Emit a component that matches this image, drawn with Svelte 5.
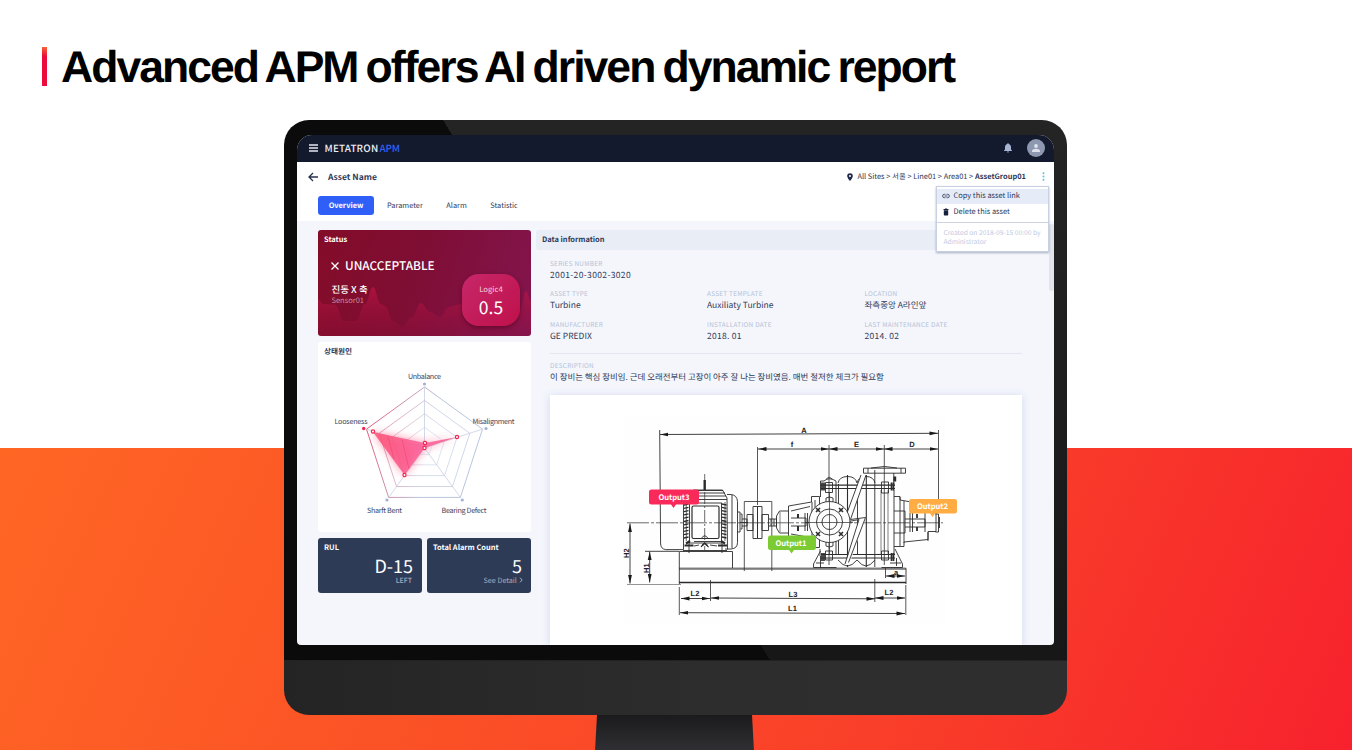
<script>
  const tabs = ['Overview', 'Parameter', 'Alarm', 'Statistic'];
  const fields = [
    ['SERIES NUMBER', '2001-20-3002-3020', 'wide'],
    ['ASSET TYPE', 'Turbine'],
    ['ASSET TEMPLATE', 'Auxiliaty Turbine'],
    ['LOCATION', '좌측중앙 A라인앞'],
    ['MANUFACTURER', 'GE PREDIX'],
    ['INSTALLATION DATE', '2018. 01', 'date'],
    ['LAST MAINTENANCE DATE', '2014. 02', 'date']
  ];

  const ring = (s) =>
    [0, 1, 2, 3, 4]
      .map((i) => {
        const a = (i * 72 - 90) * Math.PI / 180;
        return `${(106.5 + 61 * s * Math.cos(a)).toFixed(1)},${(106 + 61 * s * Math.sin(a)).toFixed(1)}`;
      })
      .join(' ');
  const rings = [1, 0.78, 0.56, 0.34, 0.13];
  const axes = ring(1).split(' ').map((p) => p.split(','));
  const radarLabels = [
    ['Unbalance', 106.5, 37, 33],
    ['Misalignment', 175.5, 82, 42],
    ['Bearing Defect', 146, 170.5, 45],
    ['Sharft Bent', 66.5, 170.5, 35],
    ['Looseness', 33, 82, 33]
  ];
  const endDots = [[106.5, 42], [168, 86.5], [144.3, 158], [69, 158]];
  const samples = [[55, 89.5], [107, 101], [139, 95], [106.5, 106], [86.5, 133]];

  const wavePts = [[0, 69], [5, 74], [17, 74.5], [26, 91], [38, 91], [47, 74], [55, 57], [63, 74], [67, 76], [75, 91], [84, 97], [94, 87], [103, 73], [112, 82], [122, 87], [131, 77], [144, 74], [152, 72], [161, 61], [167, 76], [176, 91], [192, 94], [202, 81], [208, 61], [213, 71]];
  const wave =
    wavePts
      .map(([x, y], i) => {
        if (!i) return `M${x} ${y}`;
        const [px, py] = wavePts[i - 1];
        const k = (x - px) * 0.42;
        return `C${px + k} ${py} ${x - k} ${y} ${x} ${y}`;
      })
      .join('') + 'V106H0z';

  /* horizontal dimension lines: x1, x2, y, label, label x, label y, rise */
  const dims = [
    [660, 938, 434.5, 'A', 804, 432.5, 1.2],
    [758, 829, 449, 'f', 792, 447, 0],
    [829, 884, 449, 'E', 856.5, 447, 0],
    [884, 938, 449, 'D', 912, 446.5, 0],
    [681, 710, 598.5, 'L2', 695, 595.5, 0],
    [711, 875, 598, 'L3', 793, 596.5, -0.8],
    [875, 905, 598, 'L2', 889, 594.5, 0],
    [680, 905, 612.7, 'L1', 792.5, 610.5, -0.8],
    [886, 905, 576, 'a', 896, 574.5, 0]
  ];
  const ribs = Array.from({ length: 11 }, (_, i) => 505 + i * 3.3);
</script>

<div class="page">
  <h1><span class="mark"></span>Advanced APM offers AI driven dynamic report</h1>

  <div class="monitor">
    <div class="bezel">
      <div class="screen">
        <header class="topbar">
          <svg class="burger" width="9" height="8" viewBox="0 0 9 8"><path d="M0 1h9M0 4h9M0 7h9" stroke="#e4e7f0" stroke-width="1.3" /></svg>
          <span class="brand">METATRON <b>APM</b></span>
          <svg class="bell" width="8" height="10" viewBox="0 0 8 10"><path d="M4 .3c.5 0 .8.3.8.8C6.200 1.500 7 2.700 7 4.200v2.300l1 1.100v.5H0v-.5l1-1.100V4.200C1 2.700 1.800 1.500 3.200 1.100c0-.5.3-.8.8-.8zM3 8.600h2c0 .6-.4 1-1 1s-1-.4-1-1z" fill="#a9b4d3" /></svg>
          <span class="avatar"><svg width="8" height="8" viewBox="0 0 8 8"><circle cx="4" cy="2" r="1.900" fill="#dde2ec" /><path d="M0 8V7c0-1.500 2.500-2.300 4-2.300S8 5.500 8 7v1z" fill="#dde2ec" /></svg></span>
        </header>

        <div class="head">
          <div class="crumbs">
            <svg class="back" width="10" height="10" viewBox="0 0 10 10"><path d="M10 5H1M5 1L1 5l4 4" fill="none" stroke="#28324f" stroke-width="1.300" /></svg>
            <strong class="asset">Asset Name</strong>
            <svg class="pin" width="6" height="8" viewBox="0 0 6 8"><path d="M3 .2a2.800 2.800 0 0 0-2.800 2.800C.2 5 3 7.900 3 7.900S5.800 5 5.800 3A2.800 2.800 0 0 0 3 .2zm0 1.800a1 1 0 1 1 0 2 1 1 0 0 1 0-2z" fill="#1f2a4a" fill-rule="evenodd" /></svg>
            <span class="trail">All Sites &gt; 서울 &gt; Line01 &gt; Area01 &gt; <b>AssetGroup01</b></span>
            <svg class="dots" width="3" height="9" viewBox="0 0 3 9"><g fill="#43c5ea"><circle cx="1.500" cy="1.200" r=".95" /><circle cx="1.500" cy="4.500" r=".95" /><circle cx="1.500" cy="7.800" r=".95" /></g></svg>
          </div>
          <nav>
            {#each tabs as t, i}
              <span class="tab" class:active={i === 0}>{t}</span>
            {/each}
          </nav>
        </div>

        <main>
          <section class="left">
            <div class="card status">
              <svg class="wave" viewBox="0 0 213 106" width="213" height="106">
                <defs><linearGradient id="wv" gradientUnits="userSpaceOnUse" x1="0" y1="57" x2="0" y2="106"><stop offset="0" stop-color="#c81644" stop-opacity=".6" /><stop offset="1" stop-color="#a01040" stop-opacity=".1" /></linearGradient></defs>
                <path d={wave} fill="url(#wv)" />
              </svg>
              <h3>Status</h3>
              <div class="verdict"><svg width="8" height="8" viewBox="0 0 8 8"><path d="M.5.5l7 7M7.500.5l-7 7" stroke="#fff" stroke-width="1.300" /></svg>UNACCEPTABLE</div>
              <div class="axis">진동 X 축</div>
              <div class="sensor">Sensor01</div>
              <div class="logic"><span>Logic4</span><em>0.5</em></div>
            </div>

            <div class="card cause">
              <h3>상태원인</h3>
              <svg class="radar" viewBox="0 0 213 190" width="213" height="190">
                <defs>
                  <linearGradient id="rg" gradientUnits="userSpaceOnUse" x1="48" y1="100" x2="112" y2="112"><stop offset="0" stop-color="#e0607f" /><stop offset="1" stop-color="#b9c5de" /></linearGradient>
                  <linearGradient id="fillg" x1="0" y1="0" x2="1" y2="0"><stop offset="0" stop-color="#fb4f72" /><stop offset=".6" stop-color="#fb5f9b" /><stop offset="1" stop-color="#fb4f80" /></linearGradient>
                  <filter id="glow" x="-30%" y="-30%" width="160%" height="160%"><feGaussianBlur stdDeviation="4.5" /></filter>
                </defs>
                {#each rings as r, i}
                  <polygon points={ring(r)} fill="none" stroke="url(#rg)" stroke-width={i ? 0.8 : 1} opacity={1 - i * 0.14} />
                {/each}
                {#each axes as a}
                  <line x1="106.500" y1="106" x2={a[0]} y2={a[1]} stroke="#bec8df" stroke-width=".7" />
                {/each}
                <polygon points="55,90 107,101 139,95 106.500,106 86.500,133" fill="#ff3d6e" opacity=".55" filter="url(#glow)" />
                <polygon points="55,90 107,101 139,95 106.500,106 86.500,133" fill="url(#fillg)" opacity=".85" />
                <path d="M70 94.500L76 117M84 97.500L91 127" stroke="#e54270" stroke-width=".5" />
                {#each samples as s}
                  <circle cx={s[0]} cy={s[1]} r="1.600" fill="#fff" stroke="#f0264f" stroke-width="1.2" />
                {/each}
                {#each endDots as d}
                  <circle cx={d[0]} cy={d[1]} r="1.600" fill="#a4b2d2" />
                {/each}
                <circle cx="45.700" cy="86.500" r="1.700" fill="#f0264f" />
                {#each radarLabels as l}
                  <text x={l[1]} y={l[2]} textLength={l[3]} text-anchor="middle">{l[0]}</text>
                {/each}
              </svg>
            </div>

            <div class="pair">
              <div class="card stat"><h3>RUL</h3><em>D-15</em><span class="left-tag">LEFT</span></div>
              <div class="card stat"><h3>Total Alarm Count</h3><em>5</em><span>See Detail <svg width="4" height="6" viewBox="0 0 4 6"><path d="M1 .7L3.200 3 1 5.300" fill="none" stroke="#b4bccb" stroke-width=".9" /></svg></span></div>
            </div>
          </section>

          <section class="right">
            <h3 class="bar">Data information</h3>
            <div class="info">
              <dl>
                {#each fields as f}
                  <div class={f[2]}><dt>{f[0]}</dt><dd>{f[1]}</dd></div>
                {/each}
              </dl>
              <div class="desc"><dt>DESCRIPTION</dt><dd>이 장비는 핵심 장비임. 근데 오래전부터 고장이 아주 잘 나는 장비였음. 매번 철저한 체크가 필요함</dd></div>
              <div class="figure">
                <svg viewBox="550 395 472 250" width="472" height="250">
                  <defs>
                    <marker id="ar" viewBox="0 0 8 4" refX="8" refY="2" markerWidth="8.500" markerHeight="4.500" markerUnits="userSpaceOnUse" orient="auto-start-reverse"><path d="M0 .2L8 2 0 3.800z" fill="#191919" /></marker>
                  </defs>
                  <rect x="624" y="415" width="321" height="210" fill="#fefefe" />
                  <g fill="none" stroke="#2c2c2c" stroke-width=".9">
                    {#each dims as d}
                      <line x1={d[0]} y1={d[2]} x2={d[1]} y2={d[2] - d[6]} marker-start="url(#ar)" marker-end="url(#ar)" />
                    {/each}
                    <line x1="630" y1="523.500" x2="630" y2="583.500" marker-start="url(#ar)" marker-end="url(#ar)" />
                    <line x1="649.700" y1="551.500" x2="649.700" y2="582.500" marker-start="url(#ar)" marker-end="url(#ar)" />
                    <path d="M757.500 447v58M829 445v120M884.300 445v120M938.500 430v81" stroke-width=".8" />
                    <path d="M627 522.800h316" stroke-width=".7" stroke-dasharray="22 2 3 2" />
                    <path d="M704.700 474v76" stroke-width=".7" stroke-dasharray="12 2 2 2" />
                    <!-- guard and motor -->
                    <path d="M659.700 430l.9 114q.4 5 5 5.600h18M645 551.300h34" />
                    <path d="M683.500 549.500V501l4-3 6-8h29l4.500 8 .5 51.500M690 493h35M688 496h38M685 499.500h42M692 490.500h31" />
                    <path d="M727 494.500h4q6 .5 6.500 7v41q0 6-6.500 6.500h-6M732 495v53M737.500 512h2.500v20h-2.500M740.500 514h1.500v15h-1.500" />
                    <rect x="689.500" y="503" width="32" height="40" />
                    <rect x="692" y="506" width="27" height="32.500" rx="1.500" stroke-width="1.200" />
                    <path d="M686.300 502v39M725 502v39" stroke-width=".7" />
                    <g stroke-width="1.300">
                      {#each ribs as y}<path d={`M684 ${y}l4.500-1M722 ${y - 1}l4.500 1`} />{/each}
                    </g>
                    <path d="M704.700 480v10" stroke-width="2.400" />
                    <path d="M684.500 545.500h9M718 545.500h9M690 541l-4 2.500M721 541l4 2.500" stroke-width="2.200" />
                    <path d="M701 539q3.700-6.500 7.400 0M694 541.500h27M689 541v12M722 541v12M694 546l5-1M710 545l7 1M683 550.500h44" />
                    <path d="M701 547q3.700-8 7.400 0l-3.700-3z" fill="#2c2c2c" />
                    <!-- coupling -->
                    <path d="M744.300 571v-69.500h27.500V571" stroke-width=".8" />
                    <path d="M742 519h5v7h-5M740 522.500h8M747 514.500h6v16h-6zM753 506.500h4.500v32H753zM757.500 506.500h4.500v32h-4.500zM762 514.500h6.500v16H762zM768.500 519h8v7h-8M771 519v7M774 519v7M776.500 516l3-5h9v22h-9l-3-5z" />
                    <path d="M780 512v20" stroke-width=".6" />
                    <!-- pump left bearing -->
                    <path d="M788.500 511v-5l23-4v-5.500h8v51h-8V542l-23-4v-5M791 511l19-4.500M791 534l19 3.500M791 518h15v8h-15M805 513v18M807.500 513v18M812 502v40M815 500v45" />
                    <path d="M798 514v4M798 526v5" stroke-width="2" />
                    <!-- stages -->
                    <path d="M820.500 497v-16h3.500q5-4.500 12 0v74M838.500 484v71M857.500 484v70M874.800 470v97M894 490v64M838 483q1.500-6.500 9.500-6.500t9.500 6.500M857 483q1.500-6.500 9-6.500t9 6.500M820 549v7M838 560q5 6 9.500 6t9.500-6M857 560q5 6 9 6t9-6" />
                    <path d="M847.500 475v92M866.300 475v92" stroke-width="1.100" />
                    <path d="M881 490v64M888 490v64" stroke-width=".6" />
                    <path d="M821 485.200h74M821 488.500h74M821 554.500h74M821 558h74" stroke-width="1.200" />
                    <path d="M822 482.500v8M824 482.500v8M891.500 482.500v8M893.500 482.500v8M822 553v8M824 553v8M891.500 553v8M893.500 553v8" stroke-width="1.700" />
                    <path d="M825.500 482.500h7v10h-7zM881.500 482h7v11h-7zM825.500 551h7v9h-7zM881.500 551h7v9h-7zM826 479.500q3-4 6.500 0" />
                    <path d="M863.500 468.200h42v5h-42zM868 468v5M901 468v5M871 468q14-3 26 0M893.800 473v12" />
                    <path d="M894.800 476.500v5" stroke-width="2.800" />
                    <!-- break line -->
                    <path d="M861 475l-17.500 47.500 15.500-3-14 45.500 4 0 16.500-47-15 2 15.500-45z" fill="#fefefe" stroke="none" />
                    <path d="M861 475l-17.500 47.500 15.500-3-14 44.500M866 475l-15.500 44.500 15-2-17 45" />
                    <!-- right bearing -->
                    <path d="M894 496.500h6v3.500l28 5v8M894 546.500h10v-4.500l24-2.500v-8h8V513M900 497v49M904 501v42M894 511h11v22h-11M910 513v19M912.500 513v19M905 519h20v8h-20M925 512v20M935.500 514h3v18h-3M939.500 517v11M928 541v-9" />
                    <path d="M917 514v4M917 527v4" stroke-width="1.800" />
                    <!-- inlet flange -->
                    <circle cx="829.500" cy="522" r="20.500" fill="#fefefe" />
                    <circle cx="829.500" cy="522" r="13" />
                    <circle cx="829.500" cy="522" r="7.500" />
                    <path d="M826 502v-4q3.500-2 7 0v4M826 542v4q3.500 2 7 0v-4" />
                    <path d="M829.500 492v63M805 522.500h48" stroke-width=".7" />
                    <path d="M816 508l4 4m0-4l-4 4M839 508l4 4m0-4l-4 4M816 532l4 4m0-4l-4 4M839 532l4 4m0-4l-4 4" stroke-width="1.600" />
                    <!-- feet and base -->
                    <path d="M820.500 551l-7 13v3.500h23M895 549l7.500 15v3.500h-21M816 563h8M890 563h11M820.500 556v12M896.500 558v8" />
                    <path d="M679.300 584v-32.500h53.200V568M679 568.200h227V584" />
                    <path d="M679 569.500h227M627 584.500h54" stroke-width=".5" />
                    <path d="M679 582.500h227" stroke-width="1.700" />
                    <path d="M679.300 587v28M710.500 580v21M874.800 579v23M905.800 585v30M885.500 568v10" stroke-width=".8" />
                  </g>
                  <g class="dimtext">
                    {#each dims as d}<text x={d[4]} y={d[5]} text-anchor="middle">{d[3]}</text>{/each}
                    <text transform="translate(629 558) rotate(-90)">H2</text>
                    <text transform="translate(649 573) rotate(-90)">H1</text>
                  </g>
                  <g class="tag">
                    <path d="M651.500 489.500h45q2.500 0 2.500 2.500v10q0 2.500-2.500 2.500H676l-2.500 3.500-2.500-3.500h-19.500q-2.500 0-2.500-2.500v-10q0-2.500 2.500-2.500z" fill="#f92a59" />
                    <text x="674" y="499.700" textLength="31" text-anchor="middle">Output3</text>
                    <path d="M770.500 535.500h43q2.500 0 2.500 2.500v9.500q0 2.500-2.500 2.500H794l-2.500 3.500-2.500-3.500h-18.500q-2.500 0-2.500-2.500V538q0-2.500 2.500-2.500z" fill="#7ccb32" />
                    <text x="791" y="545.700" textLength="31" text-anchor="middle">Output1</text>
                    <path d="M911.500 499h43q2.500 0 2.500 2.500v9.500q0 2.500-2.500 2.500H935l-2.500 3.500-2.500-3.500h-18.500q-2.500 0-2.500-2.500v-9.500q0-2.500 2.500-2.500z" fill="#ffad42" />
                    <text x="932.500" y="509.200" textLength="31" text-anchor="middle">Output2</text>
                  </g>
                </svg>
              </div>
            </div>
          </section>
          <div class="scroll"></div>
        </main>

        <div class="menu">
          <div class="item on"><svg width="8" height="8" viewBox="0 0 8 8"><path d="M3.500 2.300H2.300a1.700 1.700 0 0 0 0 3.400h1.200M4.500 2.300h1.200a1.700 1.700 0 0 1 0 3.400H4.500M2.500 4h3" fill="none" stroke="#2d3855" stroke-width=".8" /></svg>Copy this asset link</div>
          <div class="item"><svg width="8" height="8" viewBox="0 0 8 8"><path d="M1.500 1h1.300l.4-.5h1.600l.4.500h1.300v.9h-5zM1.800 2.300h4.400v4.500q0 .7-.7.7h-3q-.7 0-.7-.7z" fill="#17203d" /></svg>Delete this asset</div>
          <p>Created on 2018-09-15 00:00 by<br />Administrator</p>
        </div>
      </div>
    </div>
    <div class="chin"></div>
  </div>
  <div class="stand"></div>
</div>

<style>
  :global(body) { margin: 0; overflow: hidden; }
  .page {
    width: 1352px; height: 750px; overflow: hidden;
    display: flex; flex-direction: column; align-items: center;
    text-rendering: geometricPrecision;
    font-family: "Noto Sans CJK KR", "Noto Sans", sans-serif; color: #303a58;
    background:
      linear-gradient(#fff, #fff) 0 0 / 100% 448px no-repeat,
      linear-gradient(114deg, #ff6624 0%, #fb5026 38%, #f93e29 68%, #f7212d 100%) 0 448px / 100% 302px no-repeat;
  }
  .page * { box-sizing: border-box; }
  h1, h3, p, dl, dd { margin: 0; }
  em { font-style: normal; }
  h1 {
    align-self: stretch; flex: none; height: 120px; padding: 47px 0 0 42px;
    display: flex; gap: 14px; white-space: nowrap; color: #000;
    font: bold 44.500px/42px "Liberation Sans", Arial, sans-serif; letter-spacing: -1.960px; word-spacing: -2.300px;
  }
  .mark { width: 5px; height: 39px; background: linear-gradient(15deg, #ec0b3a 75%, #f86a35 100%); }
  .monitor { width: 783px; flex: none; margin-right: 1px; }
  .bezel {
    height: 540px; padding: 15px 13px; border-radius: 25px 25px 0 0;
    background: linear-gradient(to top right, #0b0b0b 0 50%, transparent 50%) 159px 0 / 327px 540px no-repeat,
      linear-gradient(#0b0b0b, #0b0b0b) 0 0 / 159px 100% no-repeat,
      linear-gradient(#242424, #171717);
  }
  .screen { position: relative; width: 757px; height: 510px; border-radius: 15px 15px 4px 4px; overflow: hidden; background: #f4f6fc; display: flex; flex-direction: column; }
  .chin { height: 55px; border-radius: 0 0 25px 25px; background: linear-gradient(90deg, #242424, #2d2d2d 55%, #2e2e2e); border-top: 1px solid #242120; }
  .stand { width: 160px; height: 36px; margin-right: 2px; flex: none; background: linear-gradient(#1b1b1d, #302f33); clip-path: polygon(2px 0, 157px 0, 159px 100%, 0 100%); }

  .topbar { height: 27px; flex: none; background: #141a2e; display: flex; align-items: center; padding: 0 9px 2px 11.500px; }
  .brand { margin-left: 7px; font-size: 9.900px; line-height: 12px; font-weight: 500; letter-spacing: .18px; color: #eceef4; }
  .brand b { font-weight: 500; color: #2f62f5; margin-left: -1.200px; letter-spacing: -.2px; }
  .bell { margin-left: auto; }
  .avatar { margin-left: 15.500px; width: 18px; height: 18px; border-radius: 50%; background: #8d97af; display: grid; place-items: center; }

  .head { height: 59px; flex: none; background: #fff; }
  .crumbs { height: 29px; display: flex; align-items: center; padding: 0 9px 0 11px; line-height: 12px; }
  .asset { margin-left: 10px; font-size: 8.500px; font-weight: 700; }
  .pin { margin-left: auto; }
  .trail { margin: 0 16px 0 4px; font-size: 7.450px; white-space: nowrap; }
  .dots { margin-right: 0; }
  nav { display: flex; padding: 5px 0 0 21px; font-size: 7.400px; line-height: 19px; }
  .tab { margin-right: 23.500px; }
  .tab.active { width: 56px; margin-right: 13px; border-radius: 3px; background: #305ff8; color: #fff; text-align: center; font-weight: 700; }

  main { flex: 1; min-height: 0; display: flex; padding: 9px 0 0 21px; gap: 5px; }
  .left { width: 213px; flex: none; display: flex; flex-direction: column; gap: 6px; }
  .card { border-radius: 3px; padding: 4px 6px; position: relative; }
  h3 { font-size: 7.450px; line-height: 12px; font-weight: 700; }
  .status { height: 106px; color: #fff; background: linear-gradient(108deg, #830c28, #7f0e34 45%, #82154f); overflow: hidden; }
  .wave { position: absolute; left: 0; top: 0; }
  .status h3 { position: relative; }
  .verdict { position: relative; margin: 11.500px 0 0 7px; display: flex; align-items: center; gap: 6px; font-size: 11.850px; line-height: 16px; font-weight: 500; }
  .axis { position: relative; margin: 9px 0 0 7.500px; font-size: 9.500px; line-height: 12px; font-weight: 500; }
  .sensor { position: relative; margin-left: 7.500px; font-size: 7.500px; line-height: 12px; color: #ca8b9f; }
  .logic { position: absolute; left: 144px; top: 44px; width: 58px; height: 52px; border-radius: 17px; background: linear-gradient(135deg, #c7276a, #bf114a); box-shadow: 0 2px 4px rgba(70, 0, 25, .5); display: flex; flex-direction: column; align-items: center; padding-top: 9.500px; }
  .logic span { font-size: 7.600px; line-height: 12px; color: #f0bacd; font-weight: 500; }
  .logic em { font-size: 17.500px; line-height: 24px; }
  .cause { height: 190px; background: #fff; }
  .cause h3 { font-size: 7.600px; font-weight: 700; }
  .radar { position: absolute; left: 0; top: 0; }
  .radar text { font-size: 7.200px; fill: #3c4560; }
  .pair { display: grid; grid-template-columns: 104px 104px; gap: 5px; }
  .stat { height: 55px; background: #2e3b57; color: #fff; display: flex; flex-direction: column; }
  .stat em { font-size: 18px; line-height: 22px; margin-top: 1px; text-align: right; padding-right: 3px; }
  .stat span { font-size: 7.200px; line-height: 9px; text-align: right; color: #a5aec0; padding-right: 2.500px; margin-top: -.5px; }
  .stat .left-tag { font-size: 7px; font-weight: 500; padding-right: 4px; }

  .right { width: 508px; flex: none; }
  .bar { height: 20px; line-height: 20px; padding-left: 6px; background: #e9edf6; border-radius: 3px; }
  .info { padding-left: 14px; width: 486px; }
  dl { display: grid; grid-template-columns: 157px 157.500px 157.500px; grid-auto-rows: 30.800px; padding-top: 7.500px; height: 103.500px; border-bottom: 1px solid #e2e6f0; }
  .wide { grid-column: 1 / -1; }
  dt { font-size: 6.400px; line-height: 11px; color: #b4c1d5; letter-spacing: .28px; white-space: nowrap; }
  dd { font-size: 8.500px; line-height: 13px; white-space: nowrap; }
  .wide dd { letter-spacing: .36px; }
  .date dd { letter-spacing: .28px; }
  .desc { padding-top: 6px; height: 41.500px; }
  .desc dd { font-size: 8.450px; }
  .figure { width: 472px; height: 250px; background: #fff; box-shadow: 0 1px 8px rgba(85, 105, 180, .2); }
  .figure svg { display: block; }
  .dimtext { font: bold 7.500px "Liberation Sans", Arial, sans-serif; fill: #222; }
  .tag text { font-size: 7.600px; font-weight: 700; fill: #fff; }
  .scroll { position: absolute; right: 0; top: 89px; width: 5px; height: 67px; border-radius: 2px; background: #e1e4eb; }

  .menu { position: absolute; left: 639px; top: 51px; width: 113px; height: 66px; padding-top: 1.500px; background: #fff; border: 1px solid #c8d1e4; box-shadow: 0 1px 2px rgba(50, 65, 100, .4); }
  .item { height: 16px; display: flex; align-items: center; gap: 3.500px; padding: 0 0 0 5px; font-size: 7.450px; line-height: 14px; }
  .item.on { height: 15px; background: #e5ebf7; }
  .menu p { margin-top: 2.500px; border-top: 1px solid #cdd5e5; padding: 4.500px 0 0 6.500px; font-size: 6.700px; line-height: 9.500px; color: #c0c9e2; white-space: nowrap; }
</style>
